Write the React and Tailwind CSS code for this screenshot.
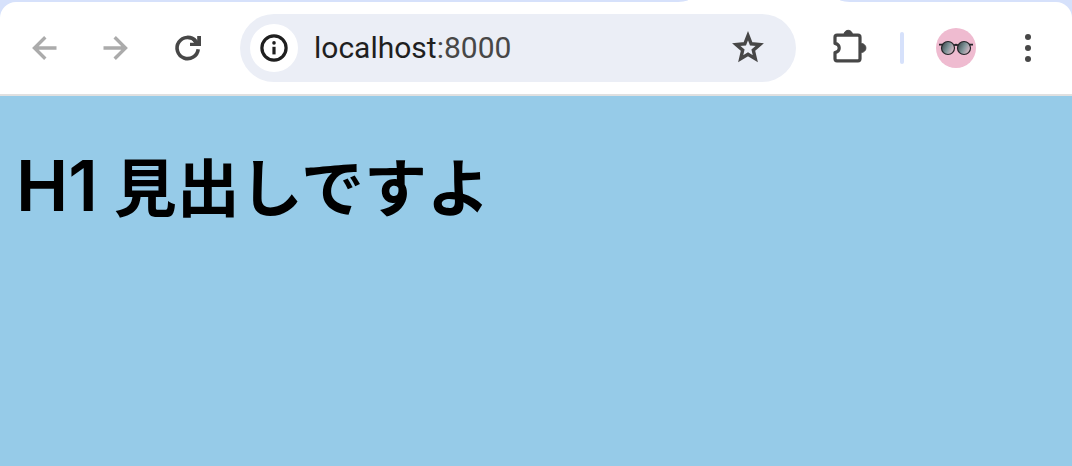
function IconButton({ label, className = "", children }) {
  return (
    <button
      type="button"
      aria-label={label}
      className={`flex size-10 shrink-0 items-center justify-center ${className}`}
    >
      {children}
    </button>
  );
}

function BackIcon() {
  return (
    <svg viewBox="0 0 40 40" className="size-10" fill="none" stroke="currentColor" strokeWidth="3.4">
      <path d="M32.5 20H10.5M21.3 9.2 10.5 20l10.8 10.8" />
    </svg>
  );
}

function ForwardIcon() {
  return (
    <svg viewBox="0 0 40 40" className="size-10" fill="none" stroke="currentColor" strokeWidth="3.4">
      <path d="M7.5 20h22M18.7 9.2 29.5 20 18.7 30.8" />
    </svg>
  );
}

function ReloadIcon() {
  return (
    <svg viewBox="0 0 40 40" className="size-10" fill="none" stroke="currentColor">
      <path d="M30.2 21.2A10.6 10.6 0 1 1 27.6 13" strokeWidth="3.6" />
      <path d="M29.2 8H33v10H22v-3.2h4l-1.6-2.3 2.6-2.3 2.2 2.2z" fill="currentColor" stroke="none" />
    </svg>
  );
}

function InfoIcon() {
  return (
    <svg viewBox="0 0 28 28" className="size-7" fill="none" stroke="currentColor">
      <circle cx="14" cy="14" r="12.1" strokeWidth="3.2" />
      <path d="M14 12.8v7.6" strokeWidth="3.2" />
      <circle cx="14" cy="8.9" r="1.8" fill="currentColor" stroke="none" />
    </svg>
  );
}

function StarIcon() {
  return (
    <svg viewBox="0 0 40 40" className="size-10" fill="none" stroke="currentColor" strokeWidth="3.4">
      <path d="m20 7.6 3.2 8.2 8.6.7-6.5 5.7 2 8.5L20 26.2l-7.3 4.5 2-8.5-6.5-5.7 8.6-.7z" />
    </svg>
  );
}

function ExtensionIcon() {
  return (
    <svg viewBox="-1.5 0 40 40" className="size-10" fill="currentColor">
      <path
        d="M8 7.2h20.5a2 2 0 0 1 2 2v21.6a2 2 0 0 1-2 2h-21a2 2 0 0 1-2-2v-6.2c2.6-.6 4.2-2.3 4.2-4.6s-1.6-4-4.2-4.6V9.2a2 2 0 0 1 2-2z"
        fill="none"
        stroke="currentColor"
        strokeWidth="3.2"
        strokeLinejoin="round"
      />
      <path d="M14.5 6.5a4.2 4.2 0 0 1 8.4 0zM32 15.6a4.4 4.4 0 0 1 0 8.8z" stroke="currentColor" />
    </svg>
  );
}

function GlassesIcon() {
  return (
    <svg viewBox="0 0 40 40" className="size-10">
      <defs>
        <linearGradient id="lens" x1="0" y1="0.2" x2="1" y2="0.7">
          <stop offset="0" stopColor="#3c474b" />
          <stop offset="0.5" stopColor="#809599" />
          <stop offset="1" stopColor="#e5bdcc" />
        </linearGradient>
      </defs>
      <g fill="url(#lens)" stroke="#252529" strokeWidth="1.2">
        <circle cx="12" cy="20" r="6.5" />
        <circle cx="28" cy="20" r="6.5" />
      </g>
      <path
        d="M3 16.7h4M33 16.7h4M18 17.5q2-1.6 4 0"
        fill="none"
        stroke="#252529"
        strokeWidth="1.8"
      />
    </svg>
  );
}

function MenuIcon() {
  return (
    <svg viewBox="0 0 40 40" className="size-10" fill="currentColor">
      <circle cx="20" cy="9" r="3" />
      <circle cx="20" cy="20" r="3" />
      <circle cx="20" cy="31" r="3" />
    </svg>
  );
}

function TabStrip() {
  return (
    <div className="flex h-0.5 bg-white">
      <div className="grow rounded-br-[16px_2px] bg-[#d6e1fb]" />
      <div className="w-38 shrink-0" />
      <div className="w-58 shrink-0 rounded-bl-[16px_2px] bg-[#d6e1fb]" />
    </div>
  );
}

function Toolbar() {
  return (
    <div className="flex items-center rounded-t-2xl border-b-2 border-[#e0e0e0] bg-white px-6 py-3 text-[#474747]">
      <nav aria-label="Navigation" className="flex gap-8 text-[#ababab]">
        <IconButton label="Back"><BackIcon /></IconButton>
        <IconButton label="Forward"><ForwardIcon /></IconButton>
        <IconButton label="Reload" className="text-[#474747]"><ReloadIcon /></IconButton>
      </nav>
      <div className="ml-8 flex h-17 min-w-0 grow items-center gap-4 rounded-full bg-[#ebeef6] pr-7 pl-2.5">
        <button
          type="button"
          aria-label="Site information"
          className="flex size-12 shrink-0 items-center justify-center rounded-full bg-white text-[#1f1f1f]"
        >
          <InfoIcon />
        </button>
        <div className="min-w-0 grow text-[30px] leading-9 text-[#1f1f1f]">
          localhost<span className="text-[#474747]">:8000</span>
        </div>
        <IconButton label="Bookmark this page"><StarIcon /></IconButton>
      </div>
      <IconButton label="Extensions" className="ml-8"><ExtensionIcon /></IconButton>
      <div className="mx-8 h-8 w-1 shrink-0 rounded-full bg-[#d6e1fb]" />
      <IconButton label="Profile" className="rounded-full bg-[#efbbd0]"><GlassesIcon /></IconButton>
      <IconButton label="Menu" className="ml-8"><MenuIcon /></IconButton>
    </div>
  );
}

export default function App() {
  return (
    <div className="flex min-h-screen flex-col bg-[#96cbe8] font-['Roboto','Noto_Sans_CJK_JP',sans-serif]">
      <header className="bg-[#d6e1fb]">
        <TabStrip />
        <Toolbar />
      </header>
      <main className="grow px-4 py-10">
        <h1 className="font-['Noto_Sans_CJK_JP',sans-serif] text-[63px] leading-24 font-bold text-black">
          <span className="mr-4 font-['Inter',sans-serif] text-[70px] font-semibold">H1</span>
          見出しですよ
        </h1>
      </main>
    </div>
  );
}
